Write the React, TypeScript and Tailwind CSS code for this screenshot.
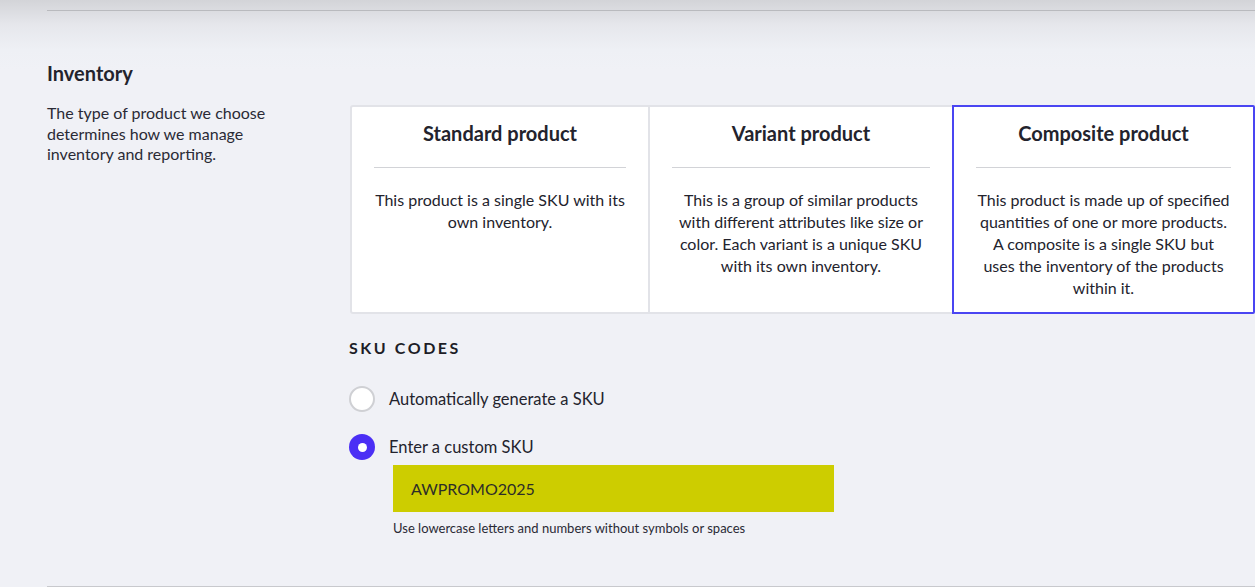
import React from "react";

type Card = { title: string; body: React.ReactNode; selected?: boolean };

const cards: Card[] = [
  {
    title: "Standard product",
    body: (
      <>
        This product is a single SKU with its
        <br />
        own inventory.
      </>
    ),
  },
  {
    title: "Variant product",
    body: (
      <>
        This is a group of similar products
        <br />
        with different attributes like size or
        <br />
        color. Each variant is a unique SKU
        <br />
        with its own inventory.
      </>
    ),
  },
  {
    title: "Composite product",
    body: (
      <>
        This product is made up of specified
        <br />
        quantities of one or more products.
        <br />
        A composite is a single SKU but
        <br />
        uses the inventory of the products
        <br />
        within it.
      </>
    ),
    selected: true,
  },
];

function ProductCard({ card, index }: { card: Card; index: number }) {
  return (
    <div
      className={
        "relative flex flex-col overflow-hidden bg-white px-[19px] pt-[12px] " +
        (card.selected
          ? "border-2 border-[#4a45f2] rounded-r-[2px]"
          : index === 0
          ? "border-2 border-[#e2e3e8] rounded-l-[3px]"
          : "border-y-2 border-[#e2e3e8]")
      }
    >
      <h3 className="text-center text-[20px] leading-[28px] font-bold text-[#23232d]">
        {card.title}
      </h3>
      <div className="mx-[3px] mt-[20px] h-px bg-[#d2d3d7]" />
      <p className="mt-[21px] whitespace-nowrap text-center text-[16px] leading-[22px] text-[#23232d]">
        {card.body}
      </p>
    </div>
  );
}

function Radio({ checked, label }: { checked?: boolean; label: string }) {
  return (
    <label className="flex items-center gap-[14px]">
      {checked ? (
        <span className="flex h-[26px] w-[26px] items-center justify-center rounded-full bg-[#4b2ff5]">
          <span className="h-[9px] w-[9px] rounded-full bg-white" />
        </span>
      ) : (
        <span className="h-[26px] w-[26px] rounded-full border-2 border-[#cfd0d4] bg-white" />
      )}
      <span className="text-[16.5px] leading-[22px] text-[#23232d]">{label}</span>
    </label>
  );
}

export default function App() {
  return (
    <div
      className="flex h-[587px] w-full flex-col overflow-hidden bg-[linear-gradient(to_bottom,#d3d4d8_0px,#e6e7ec_25px,#eef0f5_50px,#f0f1f6_70px)] pl-[47px]"
      style={{ fontFamily: "Lato, 'Open Sans', sans-serif" }}
    >
      <div className="mt-[10px] h-px bg-[#b9babe]" />

      <h2 className="mt-[48px] text-[20px] leading-[28px] font-bold text-[#23232d]">
        Inventory
      </h2>

      <div className="mt-[16px] flex">
        <p className="w-[303px] shrink-0 pr-[70px] text-[16px] leading-[20.5px] text-[#2a2a35]">
          The type of product we choose determines how we manage inventory and reporting.
        </p>

        <div className="flex-1 pt-[2px]">
          <div className="grid h-[209px] grid-cols-[300px_302px_303px]">
            {cards.map((c, i) => (
              <ProductCard key={c.title} card={c} index={i} />
            ))}
          </div>

          <div className="-ml-px">
            <h4 className="mt-[23px] text-[16px] leading-[22px] font-bold tracking-[0.16em] text-[#1d1d26]">
              SKU CODES
            </h4>

            <div className="mt-[27px] flex flex-col gap-[22px]">
              <Radio label="Automatically generate a SKU" />
              <Radio checked label="Enter a custom SKU" />
            </div>

            <div className="ml-[44px] mt-[5px]">
              <div className="flex h-[47px] w-[441px] items-center bg-[#cdcd00] pl-[18px] text-[16px] text-[#2d2d28]">
                AWPROMO2025
              </div>
              <p className="mt-[8px] text-[13px] leading-[16px] text-[#2a2a35]">
                Use lowercase letters and numbers without symbols or spaces
              </p>
            </div>
          </div>
        </div>
      </div>

      <div className="mt-auto h-px bg-[#c8c9cd]" />
    </div>
  );
}
